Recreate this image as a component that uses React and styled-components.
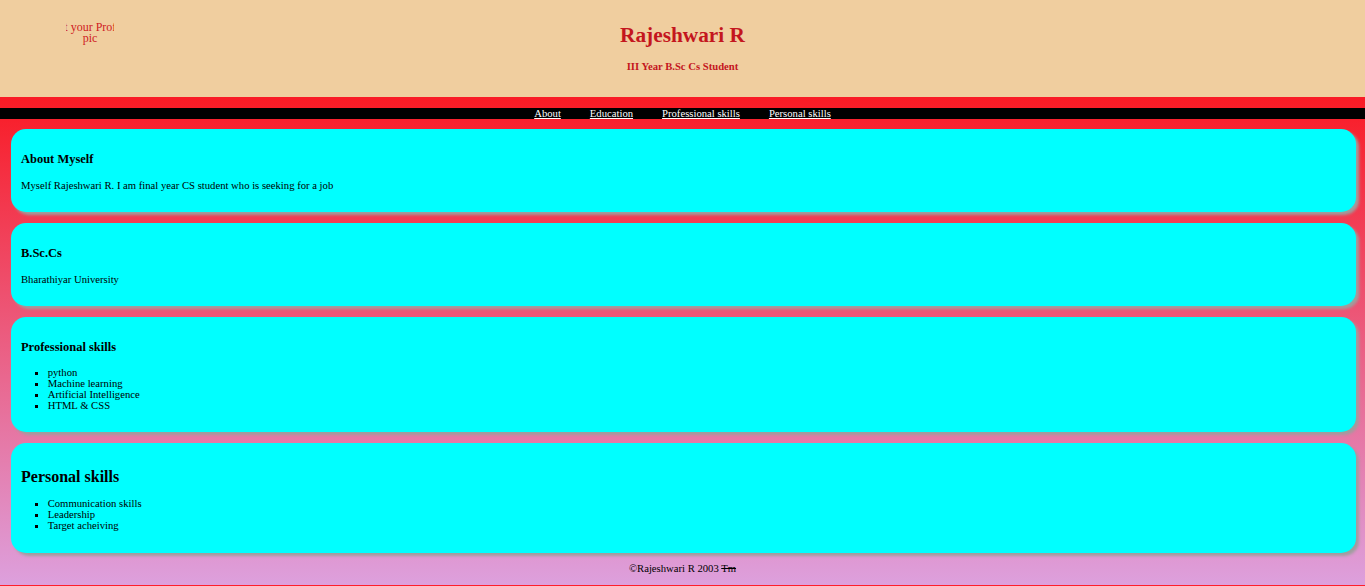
import React from "react";
import styled, { createGlobalStyle } from "styled-components";

const GlobalStyle = createGlobalStyle`
  html, body {
    margin: 0;
    padding: 0;
    background: #ff1e2a;
  }
  body {
    font-family: "Liberation Serif", "Times New Roman", serif;
    font-size: 10.67px;
    color: #000;
  }
`;

const Page = styled.div`
  min-height: 585px;
  background: linear-gradient(to bottom, #ff0000 0px, #dda0dd 585px);
  display: flex;
  flex-direction: column;
`;

const Header = styled.header`
  height: 97px;
  box-sizing: border-box;
  background: #f0ce9f;
  display: grid;
  grid-template-columns: 1fr auto 1fr;
  align-items: start;
`;

const ProfilePic = styled.div`
  width: 48px;
  height: 60px;
  margin: 22px 0 0 66px;
  overflow: hidden;
  color: #cf1a1e;
  font-size: 12px;
  line-height: 11px;
`;

const AltText = styled.span`
  display: block;
  width: 100px;
  margin-left: -26px;
  text-align: center;
  white-space: nowrap;
`;

const TitleBlock = styled.div`
  text-align: center;
  padding-top: 9px;
  color: #c4161e;
`;

const Name = styled.h1`
  font-size: 21.33px;
  line-height: 24.5px;
  font-weight: bold;
  margin: 14.3px 0 12.3px;
`;

const Role = styled.h4`
  font-size: 10.67px;
  line-height: 12px;
  font-weight: bold;
  margin: 12.3px 0;
`;

const Nav = styled.nav`
  height: 11px;
  margin: 11px 0 10px;
  background: #000;
  display: flex;
  justify-content: center;
  gap: 29px;
  line-height: 11px;
`;

const NavLink = styled.a`
  color: #fff;
  text-decoration: underline;
  font-size: 10.67px;
`;

const Main = styled.main`
  display: flex;
  flex-direction: column;
  gap: 11px;
`;

const Card = styled.section`
  background: #00ffff;
  border-radius: 15px;
  box-shadow: 3px 3px 3px #9e9e9e;
  margin: 0 9px 0 11px;
  padding: 10px 10px 11px;
  display: flow-root;
`;

const CardTitle = styled.h3`
  font-size: 12.48px;
  line-height: 14.4px;
  font-weight: bold;
  margin: 12.5px 0;
`;

const BigTitle = styled.h2`
  font-size: 16px;
  line-height: 18.4px;
  font-weight: bold;
  margin: 15.3px 0 11.3px;
`;

const Text = styled.p`
  margin: 10.67px 0 8.67px;
  line-height: 14px;
`;

const List = styled.ul`
  margin: 10.67px 0;
  padding-left: 26.7px;
  list-style: square;
  line-height: 11px;
`;

const Footer = styled.footer`
  text-align: center;
  padding: 9px 0 11px;
  line-height: 12px;
`;

export default function App() {
  return (
    <>
      <GlobalStyle />
      <Page>
        <Header>
          <ProfilePic>
            <AltText>
              Put your Profile
              <br />
              pic
            </AltText>
          </ProfilePic>
          <TitleBlock>
            <Name>Rajeshwari R</Name>
            <Role>III Year B.Sc Cs Student</Role>
          </TitleBlock>
          <div />
        </Header>
        <Nav>
          <NavLink href="#about">About</NavLink>
          <NavLink href="#education">Education</NavLink>
          <NavLink href="#professional">Professional skills</NavLink>
          <NavLink href="#personal">Personal skills</NavLink>
        </Nav>
        <Main>
          <Card id="about">
            <CardTitle>About Myself</CardTitle>
            <Text>Myself Rajeshwari R. I am final year CS student who is seeking for a job</Text>
          </Card>
          <Card id="education">
            <CardTitle>B.Sc.Cs</CardTitle>
            <Text>Bharathiyar University</Text>
          </Card>
          <Card id="professional">
            <CardTitle>Professional skills</CardTitle>
            <List>
              <li>python</li>
              <li>Machine learning</li>
              <li>Artificial Intelligence</li>
              <li>HTML &amp; CSS</li>
            </List>
          </Card>
          <Card id="personal">
            <BigTitle>Personal skills</BigTitle>
            <List>
              <li>Communication skills</li>
              <li>Leadership</li>
              <li>Target acheiving</li>
            </List>
          </Card>
        </Main>
        <Footer>
          ©Rajeshwari R 2003 <s>Tm</s>
        </Footer>
      </Page>
    </>
  );
}
